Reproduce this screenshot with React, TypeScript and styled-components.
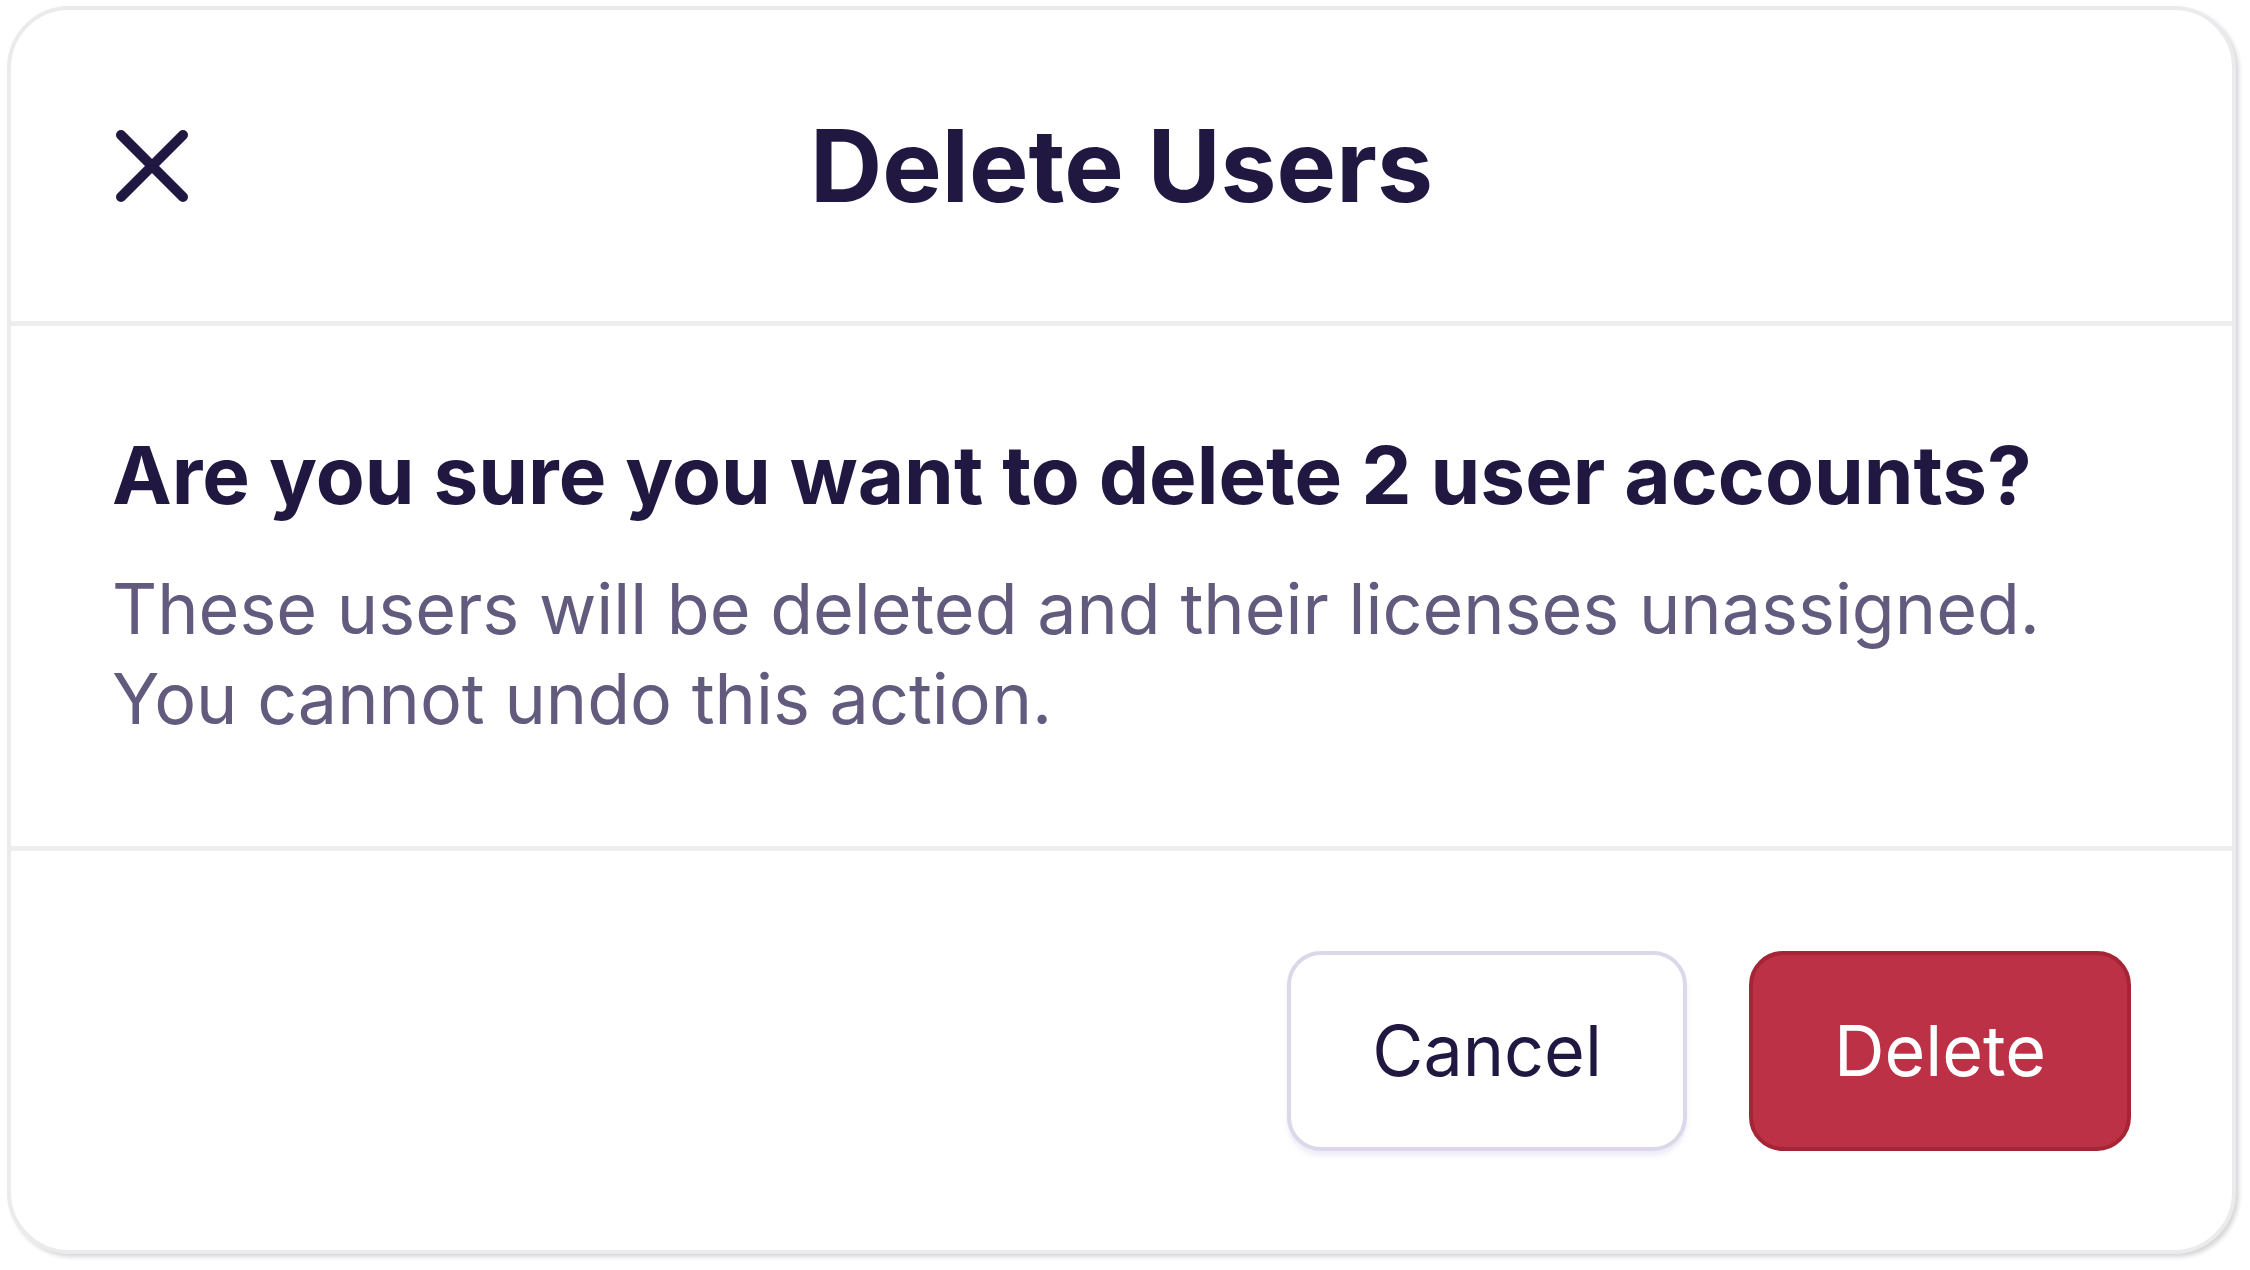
import styled, { createGlobalStyle } from "styled-components";

const GlobalStyle = createGlobalStyle`
	* {
		box-sizing: border-box;
	}
	body {
		margin: 0;
		background: #ffffff;
		font-family: Inter, "Noto Sans", "Liberation Sans", sans-serif;
	}
`;

const Page = styled.div`
	width: 2250px;
	height: 1270px;
	padding: 6px 14px 16px 7px;
`;

const Dialog = styled.div`
	width: 100%;
	height: 1248px;
	display: flex;
	flex-direction: column;
	background: #ffffff;
	border: 4px solid #ebebee;
	border-radius: 62px;
	box-shadow: 3px 3px 4px rgba(0, 0, 0, 0.16);
	overflow: hidden;
`;

const Header = styled.header`
	height: 316px;
	display: grid;
	grid-template-columns: 1fr auto 1fr;
	align-items: center;
	padding: 0 104px;
	border-bottom: 5px solid #eeeeee;
`;

const CloseButton = styled.button`
	justify-self: start;
	width: 74px;
	height: 74px;
	padding: 0;
	border: none;
	background: none;
	color: #211842;
	display: flex;
	cursor: pointer;
`;

const Title = styled.h1`
	margin: 0;
	font-size: 100px;
	font-weight: 700;
	line-height: 1.2;
	color: #211842;
`;

const Body = styled.section`
	height: 525px;
	padding: 101px 101px 0 101px;
	border-bottom: 5px solid #eeeeee;
`;

const Question = styled.h2`
	margin: 0 0 41px;
	font-size: 80px;
	font-weight: 700;
	line-height: 96px;
	color: #211842;
`;

const Message = styled.p`
	margin: 0;
	font-size: 70px;
	font-weight: 400;
	line-height: 90px;
	color: #625b7e;
`;

const Footer = styled.footer`
	flex: 1;
	display: flex;
	justify-content: flex-end;
	align-items: center;
	gap: 62px;
	padding: 0 101px;
`;

const Button = styled.button<{ $danger?: boolean }>`
	height: 200px;
	padding: 0 81px;
	border-radius: 34px;
	font-family: inherit;
	font-size: 70px;
	font-weight: 400;
	cursor: pointer;
	border: ${(p) => (p.$danger ? "4px solid #a52435" : "4px solid #dcd8ea")};
	background: ${(p) => (p.$danger ? "#bc3145" : "#ffffff")};
	color: ${(p) => (p.$danger ? "#ffffff" : "#211842")};
	box-shadow: ${(p) =>
		p.$danger ? "none" : "0 5px 4px rgba(220, 216, 234, 0.45)"};
`;

const App = () => {
	return (
		<Page>
			<GlobalStyle />
			<Dialog>
				<Header>
					<CloseButton aria-label="Close">
						<svg width="74" height="74" viewBox="0 0 74 74" fill="none">
							<path
								d="M6 6L68 68M68 6L6 68"
								stroke="currentColor"
								strokeWidth="10"
								strokeLinecap="round"
							/>
						</svg>
					</CloseButton>
					<Title>Delete Users</Title>
				</Header>
				<Body>
					<Question>Are you sure you want to delete 2 user accounts?</Question>
					<Message>
						These users will be deleted and their licenses unassigned.
						<br />
						You cannot undo this action.
					</Message>
				</Body>
				<Footer>
					<Button>Cancel</Button>
					<Button $danger>Delete</Button>
				</Footer>
			</Dialog>
		</Page>
	);
};

export default App;
